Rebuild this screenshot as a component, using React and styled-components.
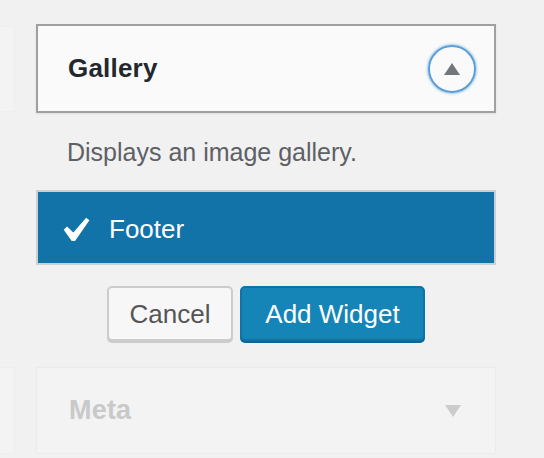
import React from 'react';
import styled, { createGlobalStyle } from 'styled-components';

const GlobalStyle = createGlobalStyle`
  html, body {
    margin: 0;
    padding: 0;
    background: #f1f1f1;
    font-family: "Liberation Sans", Arial, sans-serif;
  }
`;

const Page = styled.div`
  display: grid;
  grid-template-columns: 15px 460px;
  column-gap: 21px;
  width: 544px;
  height: 458px;
  overflow: hidden;
`;

const SideColumn = styled.div`
  overflow: hidden;
  display: flex;
  flex-direction: column;
  align-items: flex-end;
`;

const GhostWidget = styled.div`
  flex: none;
  box-sizing: border-box;
  width: 460px;
  height: ${props => props.h}px;
  margin-top: ${props => props.top}px;
  background: #f3f3f3;
  border: 1px solid #eeeeee;
`;

const MainColumn = styled.div`
  display: flex;
  flex-direction: column;
  padding-top: 24px;
`;

const WidgetTop = styled.div`
  box-sizing: border-box;
  height: 89px;
  display: flex;
  align-items: center;
  justify-content: space-between;
  padding: 0 18px 0 30px;
  background: #fafafa;
  border: 2px solid #a0a0a0;
  box-shadow: 0 1px 2px rgba(0, 0, 0, 0.08);
`;

const WidgetTitle = styled.h3`
  margin: 0;
  font-size: 26px;
  font-weight: 700;
  color: #23282d;
  letter-spacing: 0.2px;
`;

const ToggleButton = styled.button`
  box-sizing: border-box;
  width: 48px;
  height: 48px;
  padding: 0;
  border-radius: 50%;
  border: 2px solid #5b9dd9;
  background: transparent;
  box-shadow: 0 0 3px rgba(30, 140, 190, 0.8);
  display: flex;
  align-items: center;
  justify-content: center;
`;

const Description = styled.p`
  margin: 0;
  padding: 24px 0 23px 31px;
  font-size: 25px;
  line-height: 30px;
  color: #5d6065;
`;

const AreaList = styled.ul`
  list-style: none;
  margin: 0;
  padding: 0;
  border: 2px solid #cfcfcf;
`;

const AreaItem = styled.li`
  box-sizing: border-box;
  height: 71px;
  display: flex;
  align-items: center;
  gap: 19px;
  padding: 3px 0 0 25px;
  font-size: 26px;
  color: ${props => (props.selected ? '#fff' : '#555')};
  background: ${props => (props.selected ? '#1273a8' : '#fff')};
`;

const Actions = styled.div`
  display: flex;
  justify-content: center;
  gap: 7px;
  margin-top: 21px;
`;

const Button = styled.button`
  box-sizing: border-box;
  height: 55px;
  padding: 2px 20px 0;
  border-radius: 5px;
  font-family: inherit;
  font-size: 26px;
  border: 2px solid ${props => (props.primary ? '#0e73a6' : '#cccccc')};
  background: ${props => (props.primary ? '#1585b8' : '#f7f7f7')};
  color: ${props => (props.primary ? '#fff' : '#555')};
  box-shadow: 0 2px 0 ${props => (props.primary ? '#0e6596' : '#cccccc')};
  width: ${props => props.w}px;
`;

const FadedWidget = styled.div`
  box-sizing: border-box;
  height: 87px;
  margin-top: 26px;
  display: flex;
  align-items: center;
  justify-content: space-between;
  padding: 0 34px 0 32px;
  background: #f3f3f3;
  border: 1px solid #ebebeb;
`;

const FadedTitle = styled(WidgetTitle)`
  font-size: 27px;
  color: #c9c9c9;
`;

const Arrow = ({ up, color }) => (
  <svg width="16" height="12" viewBox="0 0 16 12">
    <path d={up ? 'M8 0 L16 12 L0 12 Z' : 'M0 0 L16 0 L8 12 Z'} fill={color} />
  </svg>
);

const Check = () => (
  <svg width="27" height="25" viewBox="5.5 4.6 10.9 10">
    <path
      d="M14.83 4.89l1.34.94-5.81 8.38H9.02L5.78 9.67l1.34-1.25 2.57 2.4z"
      fill="#fff"
    />
  </svg>
);

export default function App() {
  return (
    <>
      <GlobalStyle />
      <Page>
        <SideColumn>
          <GhostWidget top={26} h={86} />
          <GhostWidget top={255} h={87} />
        </SideColumn>
        <MainColumn>
          <WidgetTop>
            <WidgetTitle>Gallery</WidgetTitle>
            <ToggleButton aria-label="Collapse">
              <Arrow up color="#72777c" />
            </ToggleButton>
          </WidgetTop>
          <Description>Displays an image gallery.</Description>
          <AreaList>
            <AreaItem selected>
              <Check />
              Footer
            </AreaItem>
          </AreaList>
          <Actions>
            <Button w={126}>Cancel</Button>
            <Button primary w={185}>Add Widget</Button>
          </Actions>
          <FadedWidget>
            <FadedTitle>Meta</FadedTitle>
            <Arrow color="#cccccc" />
          </FadedWidget>
        </MainColumn>
      </Page>
    </>
  );
}
